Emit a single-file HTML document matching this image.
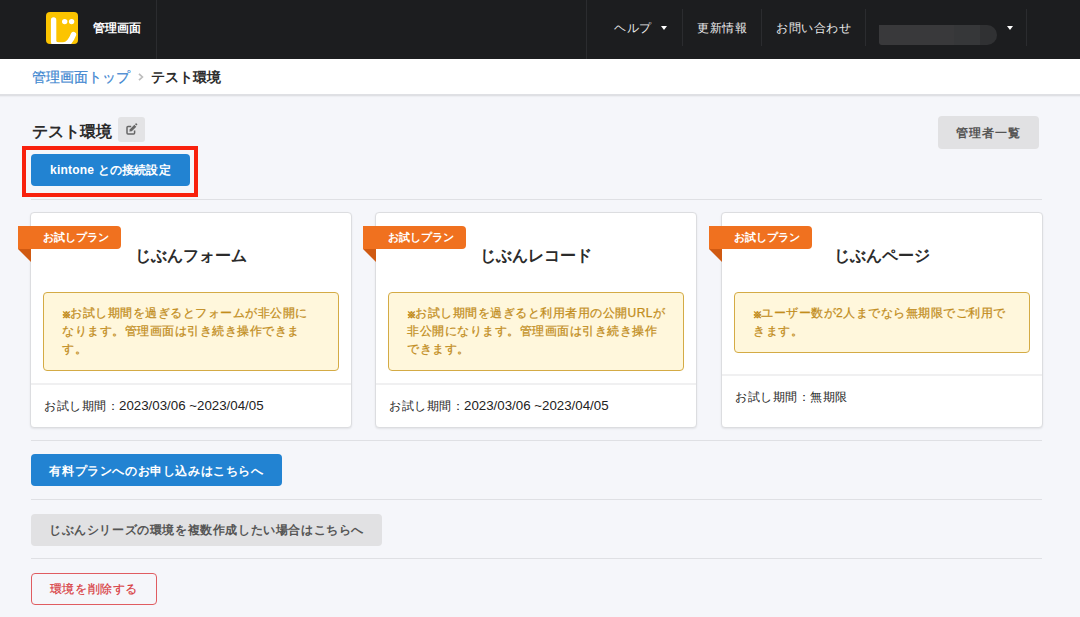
<!DOCTYPE html>
<html lang="ja"><head><meta charset="utf-8">
<style>
*{box-sizing:border-box;margin:0;padding:0}
html,body{width:1080px;height:617px;overflow:hidden}
body{font-family:"Liberation Sans",sans-serif;background:#f5f6fa;color:#222;position:relative}
.abs{position:absolute}
#hdr{left:0;top:0;width:1080px;height:59px;background:#1c1d1f}
.vline{position:absolute;top:0;width:1px;height:59px;background:#2b2c2f}
.logo{left:46px;top:12px;width:32px;height:32px;background:#fcc400;border-radius:4px;overflow:hidden}
.caret{width:0;height:0;border-left:3.5px solid transparent;border-right:3.5px solid transparent;border-top:4px solid #fff}
.htxt{color:#ececec;font-size:12px;letter-spacing:0.6px;white-space:nowrap;line-height:16px}
#bc{left:0;top:59px;width:1080px;height:37px;background:#fff;border-bottom:2px solid #dfe0e4;box-shadow:0 1px 1px rgba(0,0,0,0.03)}
.btn{position:absolute;border-radius:4px;font-size:12px;letter-spacing:0.6px;font-weight:bold;text-align:center;white-space:nowrap}
.hr{position:absolute;left:31px;width:1011px;height:1px;background:#dfe0e4}
.card{position:absolute;top:212px;width:322px;height:216px;background:#fff;border:1px solid #dcdde0;border-radius:4px;box-shadow:0 1px 2px rgba(0,0,0,.08)}
.rib{position:absolute;left:-13px;top:13px;width:103px;height:23px;background:#f0711f;border-radius:0 4px 4px 0;color:#fff;font-size:11px;font-weight:bold;line-height:23px;padding-left:25px;white-space:nowrap}
.fold{position:absolute;left:-13px;top:36px;width:0;height:0;border-top:13px solid #d05a12;border-left:13px solid transparent}
.ctitle{position:absolute;left:0;top:33px;width:100%;text-align:center;font-size:16px;font-weight:bold;color:#2b2b2b;line-height:20px}
.note{position:absolute;left:12px;top:78.5px;width:296px;background:#fff7dc;border:1.5px solid #d4ab45;border-radius:4px;color:#c28d1c;-webkit-text-stroke:0.25px #c28d1c;font-size:12px;letter-spacing:0.5px;line-height:18px;padding:11px 0 12px 18px;white-space:nowrap}
.kome{font-size:9px;line-height:0;font-weight:bold;letter-spacing:0;margin-right:-1px;vertical-align:-1px}
.csep{position:absolute;left:0;width:100%;height:2px;background:#f0f0f1}
.dg{font-size:13.3px;letter-spacing:0}
.foot{position:absolute;left:13px;font-size:12px;letter-spacing:0.5px;color:#222;line-height:16px;white-space:nowrap}
</style></head><body>
<div id="hdr" class="abs">
  <div class="vline" style="left:156px"></div>
  <div class="abs logo"><svg width="32" height="32" viewBox="0 0 32 32"><path d="M7.6 8 V29 Q7.6 33 13 33 H17 Q23.5 33 27.5 22.5" stroke="#fff" stroke-width="5.4" stroke-linecap="round" fill="none"/><circle cx="18.7" cy="9.6" r="2.7" fill="#fff"/><circle cx="25.6" cy="9.6" r="2.7" fill="#fff"/></svg></div>
  <div class="abs htxt" style="left:93px;top:20px;font-weight:bold;font-size:12px;letter-spacing:0;color:#fff">管理画面</div>
  <div class="vline" style="left:586px"></div>
  <div class="abs htxt" style="left:614px;top:20px">ヘルプ</div>
  <div class="vline" style="left:682px;top:9px;height:37px"></div>
  <div class="abs htxt" style="left:697px;top:20px">更新情報</div>
  <div class="vline" style="left:761px;top:9px;height:37px"></div>
  <div class="abs htxt" style="left:776px;top:20px">お問い合わせ</div>
  <div class="vline" style="left:865px;top:9px;height:37px"></div>
  <div class="abs" style="left:879px;top:25px;width:118px;height:20px;background:linear-gradient(to right,#39393b 0,#39393b 75px,#363739 75px,#363739 101px,#303133 101px);border-radius:0 10px 10px 3px"></div>
  <div class="abs caret" style="left:661px;top:26px"></div>
  <div class="abs caret" style="left:1007px;top:26px"></div>
  <div class="vline" style="left:1026px;top:9px;height:37px"></div>
</div>
<div id="bc" class="abs">
  <div class="abs" style="left:32px;top:10px;font-size:14px;color:#3d86d0;-webkit-text-stroke:0.2px #3d86d0;line-height:16px">管理画面トップ</div>
  <svg class="abs" style="left:136px;top:12px" width="10" height="12" viewBox="0 0 10 12"><path d="M3 2.8 L6.4 6 L3 9.2" stroke="#bdbdbd" stroke-width="1.7" fill="none"/></svg>
  <div class="abs" style="left:151px;top:10px;font-size:14px;font-weight:bold;color:#2b2b2b;line-height:16px">テスト環境</div>
</div>

<div class="abs" style="left:32px;top:122px;font-size:16px;font-weight:bold;line-height:20px;color:#2b2b2b">テスト環境</div>
<div class="abs" style="left:118px;top:117px;width:27px;height:25px;background:#e3e3e5;border-radius:3px"><svg width="27" height="25" viewBox="0 0 27 25" style="position:absolute;left:0;top:0"><path d="M13.2 9.4 H10 Q9 9.4 9 10.4 V16 Q9 17 10 17 H15.6 Q16.6 17 16.6 16 V13.6" stroke="#666" stroke-width="1.5" fill="none"/><path d="M11.3 14.6 L11.9 12.3 L16.4 7.8 L18.3 9.7 L13.8 14.2 Z" fill="#666"/><path d="M16.9 7.3 L17.6 6.6 Q18.1 6.1 18.6 6.6 L19.1 7.1 Q19.6 7.6 19.1 8.1 L18.8 8.4 Z" fill="#666"/></svg></div>

<div class="abs" style="left:22px;top:146px;width:176px;height:51px;border:4px solid #f8210d"></div>
<div class="btn" style="left:31px;top:154px;width:159px;height:32px;background:#2283d2;color:#fff;line-height:32px;border-radius:4px;letter-spacing:0.2px">kintone との接続設定</div>

<div class="btn" style="left:938px;top:116px;width:101px;height:33px;background:#e1e1e3;color:#555;line-height:34px;letter-spacing:0.85px">管理者一覧</div>

<div class="hr" style="top:199px"></div>

<div class="card" style="left:30px">
  <div class="rib">お試しプラン</div><div class="fold"></div>
  <div class="ctitle">じぶんフォーム</div>
  <div class="note"><span class="kome">※</span>お試し期間を過ぎるとフォームが非公開に<br>なります。管理画面は引き続き操作できま<br>す。</div>
  <div class="csep" style="top:170px"></div>
  <div class="foot" style="top:185px">お試し期間：<span class="dg">2023/03/06 ~2023/04/05</span></div>
</div>
<div class="card" style="left:375px">
  <div class="rib">お試しプラン</div><div class="fold"></div>
  <div class="ctitle">じぶんレコード</div>
  <div class="note"><span class="kome">※</span>お試し期間を過ぎると利用者用の公開URLが<br>非公開になります。管理画面は引き続き操作<br>できます。</div>
  <div class="csep" style="top:170px"></div>
  <div class="foot" style="top:185px">お試し期間：<span class="dg">2023/03/06 ~2023/04/05</span></div>
</div>
<div class="card" style="left:721px">
  <div class="rib">お試しプラン</div><div class="fold"></div>
  <div class="ctitle">じぶんページ</div>
  <div class="note"><span class="kome">※</span>ユーザー数が2人までなら無期限でご利用で<br>きます。</div>
  <div class="csep" style="top:161px"></div>
  <div class="foot" style="top:176px">お試し期間：無期限</div>
</div>

<div class="hr" style="top:440px"></div>
<div class="btn" style="left:31px;top:454px;width:251px;height:32px;background:#2283d2;color:#fff;line-height:34px;">有料プランへのお申し込みはこちらへ</div>
<div class="hr" style="top:499px"></div>
<div class="btn" style="left:31px;top:514px;width:351px;height:32px;background:#e1e1e3;color:#555;line-height:32px;">じぶんシリーズの環境を複数作成したい場合はこちらへ</div>
<div class="hr" style="top:558px"></div>
<div class="btn" style="left:31px;top:572.5px;width:126px;height:32px;background:transparent;border:1px solid #e05c60;color:#d83a3e;-webkit-text-stroke:0.2px #d83a3e;line-height:30px;font-weight:normal;">環境を削除する</div>
</body></html>
